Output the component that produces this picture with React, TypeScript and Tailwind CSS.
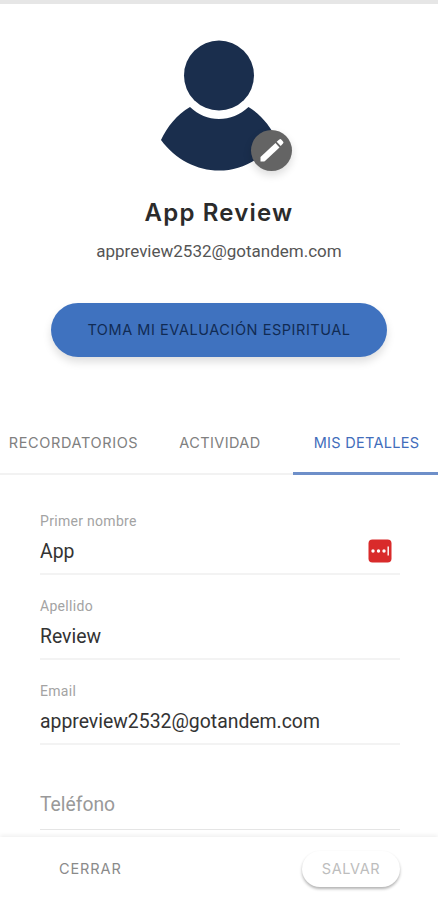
import React, { useState } from 'react';

interface Tab {
  id: string;
  label: string;
  className: string;
}

interface FieldProps {
  label: string;
  value: string;
  children?: React.ReactNode;
}

const tabs: Tab[] = [
  { id: 'reminders', label: 'RECORDATORIOS', className: 'w-[147px] tracking-[0.63px]' },
  { id: 'activity', label: 'ACTIVIDAD', className: 'w-[146px] tracking-[0.4px]' },
  { id: 'details', label: 'MIS DETALLES', className: 'w-[145px] pl-0.5 tracking-[0.3px]' },
];

const Avatar: React.FC = () => (
  <div className="relative w-[118px] h-[132px]">
    <svg viewBox="0 0 118 132" className="w-full h-full" fill="#1a2e4d">
      <circle cx="59" cy="36.500" r="35" />
      <path d="M30 68C17 75.500 7 88 1 101C16 121 37 131.500 59 131.500S101 121 117 101C111 88 101 75.500 88.500 68C80 76 70 80 59 80S38.500 76 30 68Z" />
    </svg>
    <button className="absolute left-[91px] top-[91px] w-[41px] h-[41px] rounded-full bg-[#646464] shadow-[0_4px_8px_rgba(0,0,0,0.14)]" aria-label="Editar">
      <svg viewBox="0 0 41 41" className="w-full h-full" fill="#fff">
        <path d="M9.500 31.500V27L24.500 13L28.500 17.500L14 31Q13.300 31.500 12.500 31.500Z" />
        <path d="M25.700 11.800L28.300 9.500Q29.400 8.600 30.500 9.700L32 11.400Q33 12.500 32 13.600L29.700 16.100Z" />
      </svg>
    </button>
  </div>
);

const PasswordIcon: React.FC = () => (
  <svg viewBox="0 0 24 24" className="w-6 h-6">
    <rect x="0.500" y="0.500" width="23" height="23" rx="4" fill="#d92b2b" />
    <g fill="#fff">
      <circle cx="5" cy="12" r="1.700" />
      <circle cx="10.500" cy="12" r="1.700" />
      <circle cx="16" cy="12" r="1.700" />
      <rect x="19.500" y="7.500" width="1.400" height="9" />
    </g>
  </svg>
);

const Field: React.FC<FieldProps> = ({ label, value, children }) => (
  <div className="h-[85px] border-b-2 border-[#f3f3f3] flex flex-col">
    <label className="mt-[21px] text-[14px] leading-5 text-[#a3a3a3] tracking-[0.3px]">{label}</label>
    <div className="mt-[7px] flex items-center justify-between pr-2 text-[19.400px] leading-6 text-[#333]">
      <span className="pt-0.5">{value}</span>
      {children}
    </div>
  </div>
);

const App: React.FC = () => {
  const [activeTab, setActiveTab] = useState('details');

  return (
    <div className="w-[438px] h-[900px] bg-white flex flex-col overflow-hidden font-['Roboto',sans-serif]">
      <div className="h-1 shrink-0 bg-[#e6e6e6]" />

      <header className="h-[407px] shrink-0 flex flex-col items-center pt-[35px]">
        <Avatar />
        <h1 className="mt-[27px] text-[24px] leading-[30px] font-semibold text-[#2b2b2b] tracking-[1.2px] font-['Inter',sans-serif]">
          App Review
        </h1>
        <p className="mt-[11px] text-[17px] leading-6 text-[#555]">appreview2532@gotandem.com</p>
        <button className="mt-10 w-[336px] h-[54px] shrink-0 rounded-full bg-[#3f72bf] text-[14.500px] leading-5 text-[#112b53] tracking-[0.55px] whitespace-nowrap shadow-[0_5px_8px_rgba(0,0,0,0.13)] font-['Inter',sans-serif]">
          TOMA MI EVALUACIÓN ESPIRITUAL
        </button>
      </header>

      <nav className="h-16 shrink-0 flex font-['Inter',sans-serif]">
        {tabs.map((tab) => (
          <button
            key={tab.id}
            onClick={() => setActiveTab(tab.id)}
            className={`text-[14.500px] leading-5 whitespace-nowrap ${tab.className} ${
              activeTab === tab.id ? 'pt-0.5 border-b-[3px] border-[#6e8fc9] text-[#426dbb]' : 'pt-px border-b-2 border-[#f2f2f2] text-[#808080]'
            }`}
          >
            {tab.label}
          </button>
        ))}
      </nav>

      <main className="flex-1 overflow-hidden pl-10 pr-[38px] pt-[15px]">
        <Field label="Primer nombre" value="App">
          <PasswordIcon />
        </Field>
        <Field label="Apellido" value="Review" />
        <Field label="Email" value="appreview2532@gotandem.com" />
        <div className="h-[85px] border-b border-[#e5e5e5] pt-12 text-[19.300px] leading-6 text-[#999]">Teléfono</div>
      </main>

      <footer className="h-[63px] shrink-0 flex items-center justify-between pl-[59px] pr-[38px] shadow-[0_-2px_4px_rgba(0,0,0,0.06)] font-['Inter',sans-serif]">
        <button className="text-[14.500px] text-[#8a8a8a] tracking-[0.9px]">CERRAR</button>
        <button className="w-[98px] h-9 rounded-full bg-white text-[14.500px] text-[#bdbdbd] tracking-[0.6px] shadow-[0_2px_3px_rgba(0,0,0,0.3)]">SALVAR</button>
      </footer>
    </div>
  );
};

export default App;
